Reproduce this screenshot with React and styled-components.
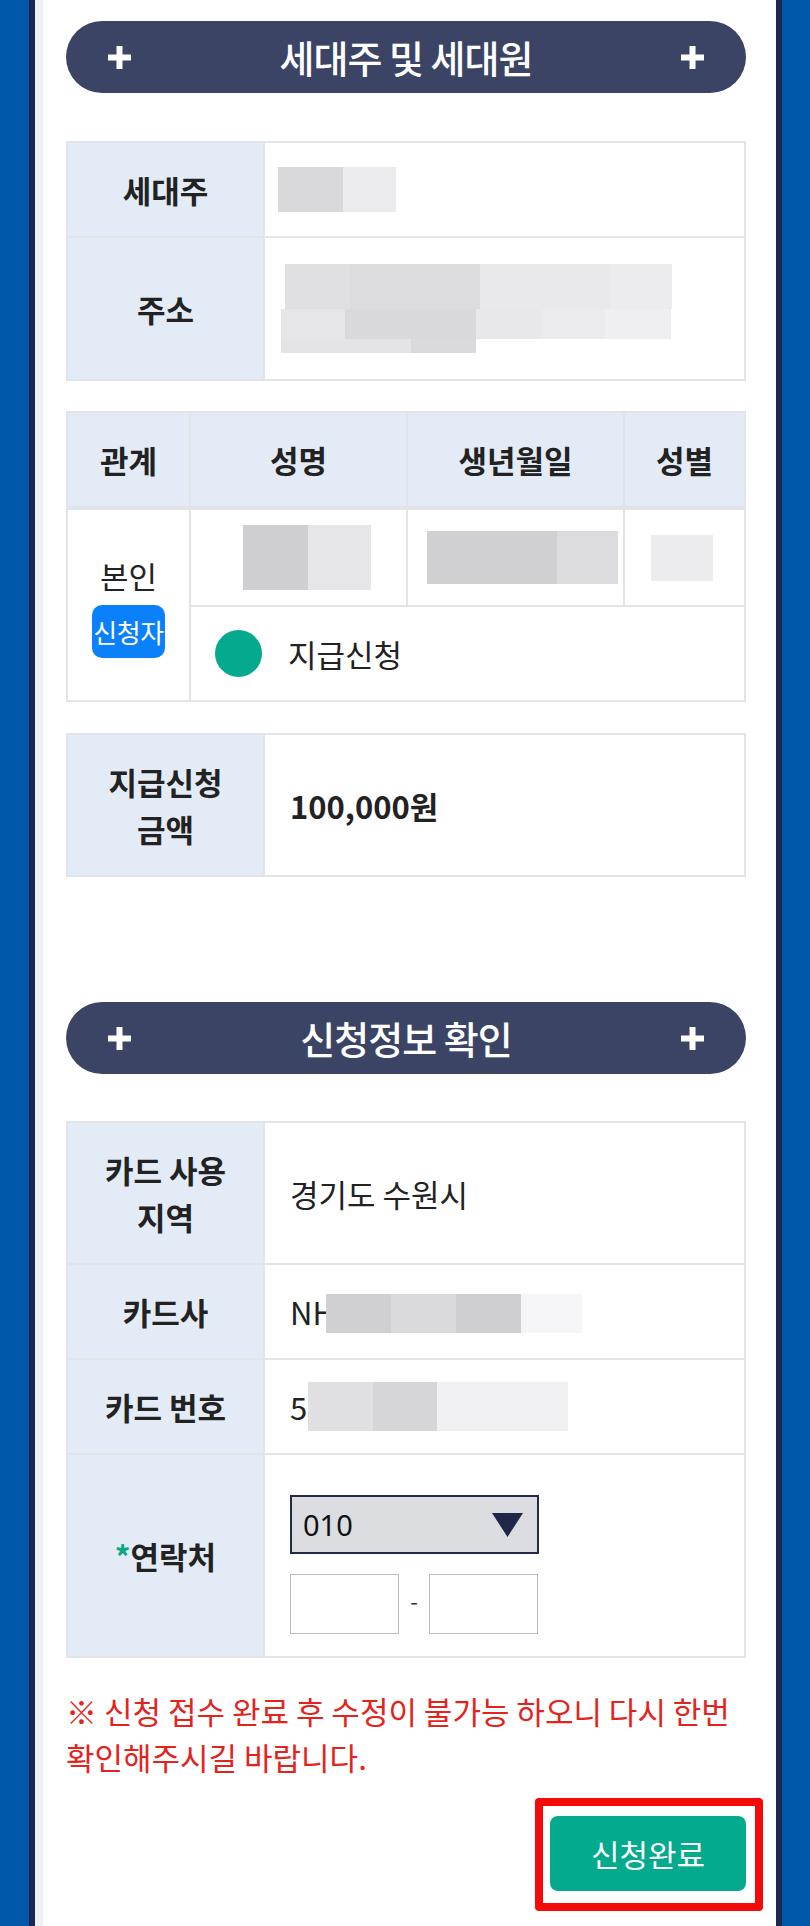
import styled, { createGlobalStyle } from "styled-components";

const GlobalStyle = createGlobalStyle`
  html, body {
    margin: 0;
    padding: 0;
  }
  body {
    background: #0058ab;
    font-family: "Noto Sans CJK KR", "Noto Sans", sans-serif;
    color: #222;
  }
  * { box-sizing: border-box; }
`;

const Shell = styled.div`
  min-height: 1926px;
  background: #0058ab;
  padding: 0 28px 0 29px;
  display: flex;
`;

const Frame = styled.div`
  flex: 1;
  display: flex;
  border-left: 6px solid #1c2651;
  border-right: 6px solid #1c2651;
`;

const Sheet = styled.main`
  flex: 1;
  background: #fff;
  border-left: 8px solid #eef0f3;
  padding: 21px 30px 0 23px;
`;

const Pill = styled.h2`
  margin: ${(p) => p.$top || 0}px 0 0;
  height: 72px;
  border-radius: 36px;
  background: #3b4465;
  color: #fff;
  display: flex;
  align-items: center;
  justify-content: space-between;
  padding: 0 41px;
  font-size: 38px;
  font-weight: 500;
  letter-spacing: -1px;
  line-height: 1;
`;

const Grid = styled.table`
  width: 100%;
  margin-top: ${(p) => p.$gap}px;
  border-collapse: collapse;
  table-layout: fixed;
  font-size: 31px;
  line-height: 47px;
  color: #222;

  th, td {
    border: 2px solid #e1e5ea;
    vertical-align: middle;
  }
`;

const Th = styled.th`
  background: #e3ecf6;
  font-weight: 700;
  text-align: center;
  padding: 23px 4px;
  border-bottom-width: ${(p) => (p.$thick ? 4 : 2)}px !important;
`;

const Td = styled.td`
  background: #fff;
  text-align: ${(p) => (p.$center ? "center" : "left")};
  padding: ${(p) => p.$pad || "23px 25px"};
  font-weight: ${(p) => (p.$bold ? 700 : 400)};
`;

const Req = styled.span`
  color: #0aa886;
`;

const Badge = styled.span`
  display: inline-block;
  margin-top: 6px;
  height: 53px;
  line-height: 53px;
  padding: 0 1px;
  border-radius: 10px;
  background: #0a80fb;
  color: #fff;
  font-size: 26px;
  letter-spacing: -0.5px;
`;

const Status = styled.div`
  display: flex;
  align-items: center;
  gap: 26px;
`;

const Dot = styled.span`
  width: 47px;
  height: 47px;
  border-radius: 50%;
  background: #04a98e;
  flex: none;
`;

const Redact = styled.div`
  display: flex;
  flex-direction: column;
  width: fit-content;
  margin: ${(p) => p.$m || 0};
`;

const RedactRow = styled.div`
  display: flex;
  height: ${(p) => p.$h}px;
  padding-left: ${(p) => p.$pl || 0}px;
`;

const Tile = styled.span`
  width: ${(p) => p.$w}px;
  background: ${(p) => p.$c};
`;

const ValueLine = styled.div`
  display: flex;
  align-items: center;
`;

const SelectBox = styled.div`
  width: 249px;
  height: 59px;
  border: 2px solid #232a4a;
  background: #dcdde1;
  display: flex;
  align-items: center;
  justify-content: space-between;
  padding: 0 14px 0 11px;
  font-family: "Noto Sans", sans-serif;
  font-size: 29px;
  color: #111;
`;

const PhoneRow = styled.div`
  display: flex;
  align-items: center;
  margin-top: 20px;
`;

const Field = styled.input`
  width: 109px;
  height: 60px;
  border: 1px solid #bcbcbc;
  background: #fff;
  padding: 0 8px;
  font-size: 24px;
`;

const Dash = styled.span`
  width: 30px;
  text-align: center;
  font-size: 22px;
  line-height: 1;
  color: #333;
  margin-top: -8px;
`;

const Notice = styled.p`
  margin: 30px 0 0;
  color: #e4231c;
  font-size: 31px;
  line-height: 46px;
  word-break: keep-all;
`;

const ButtonRow = styled.div`
  display: flex;
  justify-content: flex-end;
  margin: 18px -17px 0 0;
`;

const Highlight = styled.div`
  border: 8px solid #f50a0a;
  border-radius: 4px;
  padding: 10px 9px 12px 7px;
`;

const Submit = styled.button`
  width: 196px;
  height: 75px;
  border: none;
  border-radius: 8px;
  background: #03aa8d;
  color: #fff;
  font-family: inherit;
  font-size: 31px;
  cursor: pointer;
`;

const Plus = () => (
  <svg width="25" height="25" viewBox="0 0 25 25">
    <path d="M12.5 1v23M1 12.5h23" stroke="#fff" strokeWidth="6" />
  </svg>
);

const Caret = () => (
  <svg width="31" height="24" viewBox="0 0 31 24">
    <path d="M0 0h31L15.5 24z" fill="#1f2748" />
  </svg>
);

function Blur({ rows, m }) {
  return (
    <Redact $m={m}>
      {rows.map((r, i) => (
        <RedactRow key={i} $h={r.h} $pl={r.pl}>
          {r.cells.map(([w, c], j) => (
            <Tile key={j} $w={w} $c={c} />
          ))}
        </RedactRow>
      ))}
    </Redact>
  );
}

const headName = [{ h: 45, cells: [[65, "#d9d9dc"], [53, "#ebebed"]] }];
const address = [
  { h: 45, pl: 4, cells: [[65, "#e0e0e2"], [130, "#dcdcde"], [130, "#e9e9eb"], [62, "#ececee"]] },
  { h: 30, cells: [[64, "#e6e6e8"], [131, "#d9d9db"], [66, "#e8e8ea"], [63, "#ebebed"], [66, "#efeff1"]] },
  { h: 14, cells: [[130, "#e4e4e6"], [65, "#dadadc"]] },
];
const memberName = [{ h: 65, cells: [[65, "#cfcfd1"], [63, "#e6e6e8"]] }];
const birth = [{ h: 53, cells: [[130, "#d0d0d2"], [61, "#dcdcde"]] }];
const gender = [{ h: 46, cells: [[62, "#ececee"]] }];
const cardCo = [{ h: 39, cells: [[65, "#d0d0d3"], [65, "#dadadc"], [65, "#cfcfd2"], [61, "#f6f6f8"]] }];
const cardNo = [{ h: 49, cells: [[65, "#e0e0e2"], [64, "#d6d6d8"], [131, "#f0f0f2"]] }];

export default function App() {
  return (
    <>
      <GlobalStyle />
      <Shell>
        <Frame>
          <Sheet>
            <Pill>
              <Plus />
              <span>세대주 및 세대원</span>
              <Plus />
            </Pill>

            <Grid $gap={48}>
              <colgroup>
                <col style={{ width: 197 }} />
                <col />
              </colgroup>
              <tbody>
                <tr>
                  <Th>세대주</Th>
                  <Td>
                    <Blur rows={headName} m="0 0 0 -12px" />
                  </Td>
                </tr>
                <tr>
                  <Th>주소</Th>
                  <Td>
                    <Blur rows={address} m="3px 0 3px -9px" />
                  </Td>
                </tr>
              </tbody>
            </Grid>

            <Grid $gap={30}>
              <colgroup>
                <col style={{ width: 123 }} />
                <col style={{ width: 217 }} />
                <col style={{ width: 217 }} />
                <col />
              </colgroup>
              <thead>
                <tr>
                  <Th $thick>관계</Th>
                  <Th $thick>성명</Th>
                  <Th $thick>생년월일</Th>
                  <Th $thick>성별</Th>
                </tr>
              </thead>
              <tbody>
                <tr>
                  <Td rowSpan={2} $center $pad="23px 0">
                    <div>본인</div>
                    <Badge>신청자</Badge>
                  </Td>
                  <Td $pad="15px 0">
                    <Blur rows={memberName} m="0 0 0 52px" />
                  </Td>
                  <Td $pad="15px 0">
                    <Blur rows={birth} m="0 0 0 19px" />
                  </Td>
                  <Td $pad="15px 0">
                    <Blur rows={gender} m="0 0 0 26px" />
                  </Td>
                </tr>
                <tr>
                  <Td colSpan={3} $pad="23px 24px">
                    <Status>
                      <Dot />
                      <span>지급신청</span>
                    </Status>
                  </Td>
                </tr>
              </tbody>
            </Grid>

            <Grid $gap={31}>
              <colgroup>
                <col style={{ width: 197 }} />
                <col />
              </colgroup>
              <tbody>
                <tr>
                  <Th>
                    지급신청
                    <br />
                    금액
                  </Th>
                  <Td $bold>100,000원</Td>
                </tr>
              </tbody>
            </Grid>

            <Pill $top={125}>
              <Plus />
              <span>신청정보 확인</span>
              <Plus />
            </Pill>

            <Grid $gap={47}>
              <colgroup>
                <col style={{ width: 197 }} />
                <col />
              </colgroup>
              <tbody>
                <tr>
                  <Th>
                    카드 사용
                    <br />
                    지역
                  </Th>
                  <Td>경기도 수원시</Td>
                </tr>
                <tr>
                  <Th>카드사</Th>
                  <Td>
                    <ValueLine>
                      <span>NH</span>
                      <Blur rows={cardCo} m="4px 0 0 -9px" />
                    </ValueLine>
                  </Td>
                </tr>
                <tr>
                  <Th>카드 번호</Th>
                  <Td $pad="22px 25px">
                    <ValueLine>
                      <span>5</span>
                      <Blur rows={cardNo} m="0 0 0 1px" />
                    </ValueLine>
                  </Td>
                </tr>
                <tr>
                  <Th>
                    <Req>*</Req>연락처
                  </Th>
                  <Td $pad="40px 25px 22px">
                    <SelectBox>
                      <span>010</span>
                      <Caret />
                    </SelectBox>
                    <PhoneRow>
                      <Field type="text" aria-label="연락처 중간" />
                      <Dash>-</Dash>
                      <Field type="text" aria-label="연락처 끝" />
                    </PhoneRow>
                  </Td>
                </tr>
              </tbody>
            </Grid>

            <Notice>
              ※ 신청 접수 완료 후 수정이 불가능 하오니 다시 한번 확인해주시길 바랍니다.
            </Notice>

            <ButtonRow>
              <Highlight>
                <Submit type="button">신청완료</Submit>
              </Highlight>
            </ButtonRow>
          </Sheet>
        </Frame>
      </Shell>
    </>
  );
}
